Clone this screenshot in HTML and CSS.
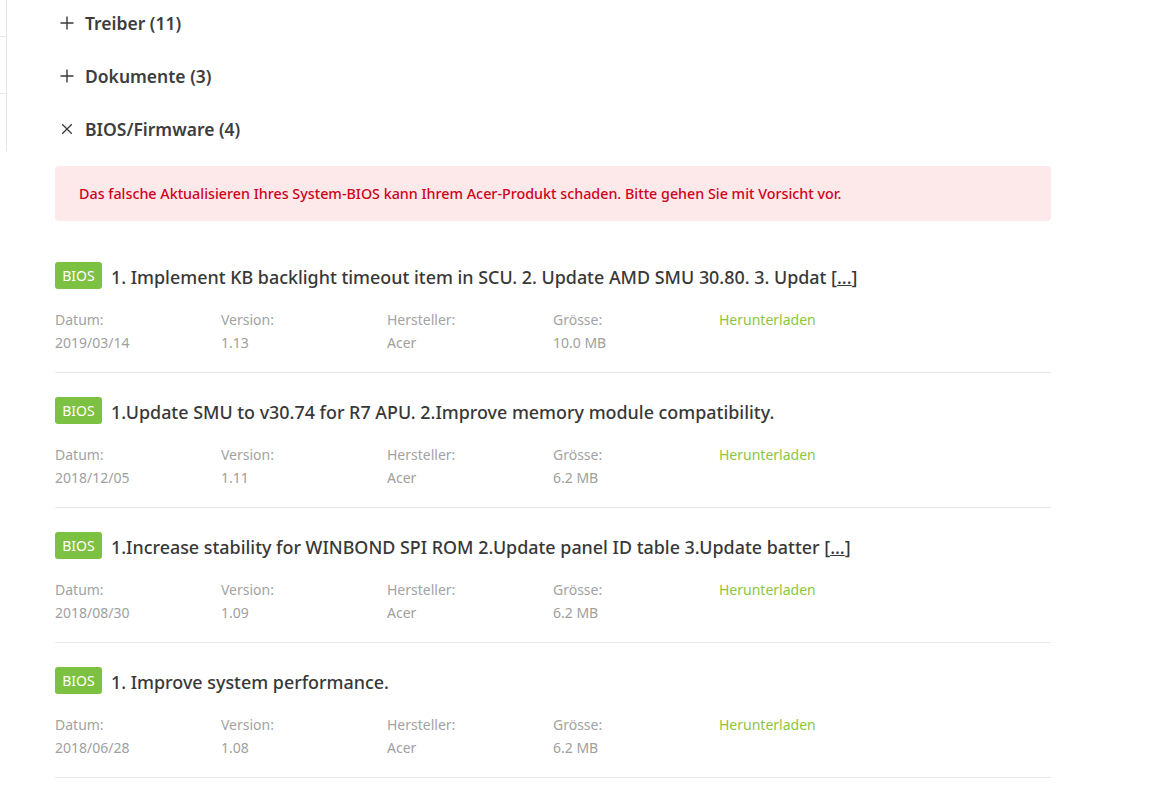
FILE: index.html
```html
<!DOCTYPE html>
<html lang="de">
<head>
<meta charset="utf-8">
<title>BIOS/Firmware</title>
<link rel="stylesheet" href="styles.css">
</head>
<body>
<div class="page">
  <aside class="sidebar">
    <div class="side-row r1"></div>
    <div class="side-row r2"></div>
    <div class="side-row r3"></div>
  </aside>
  <main class="content">
    <div class="accordion">
      <div class="acc-row">
        <svg class="acc-icon" viewBox="0 0 16 16"><path d="M8 1.5v13M1.5 8h13" /></svg>
        <span class="acc-title">Treiber (11)</span>
      </div>
      <div class="acc-row">
        <svg class="acc-icon" viewBox="0 0 16 16"><path d="M8 1.5v13M1.5 8h13" /></svg>
        <span class="acc-title">Dokumente (3)</span>
      </div>
      <div class="acc-row">
        <svg class="acc-icon close" viewBox="0 0 16 16"><path d="M3.2 3.2l9.6 9.6M12.8 3.2l-9.6 9.6" /></svg>
        <span class="acc-title">BIOS/Firmware (4)</span>
      </div>
    </div>

    <div class="alert">Das falsche Aktualisieren Ihres System-BIOS kann Ihrem Acer-Produkt schaden. Bitte gehen Sie mit Vorsicht vor.</div>

    <div class="items">
      <div class="item">
        <div class="item-head">
          <span class="badge">BIOS</span>
          <span class="item-title">1. Implement KB backlight timeout item in SCU. 2. Update AMD SMU 30.80. 3. Updat [<span class="more">...</span>]</span>
        </div>
        <div class="meta">
          <div class="cell"><span class="label">Datum:</span><span class="value">2019/03/14</span></div>
          <div class="cell"><span class="label">Version:</span><span class="value">1.13</span></div>
          <div class="cell"><span class="label">Hersteller:</span><span class="value">Acer</span></div>
          <div class="cell"><span class="label">Grösse:</span><span class="value">10.0 MB</span></div>
          <div class="cell"><span class="download">Herunterladen</span></div>
        </div>
      </div>
      <div class="item">
        <div class="item-head">
          <span class="badge">BIOS</span>
          <span class="item-title">1.Update SMU to v30.74 for R7 APU. 2.Improve memory module compatibility.</span>
        </div>
        <div class="meta">
          <div class="cell"><span class="label">Datum:</span><span class="value">2018/12/05</span></div>
          <div class="cell"><span class="label">Version:</span><span class="value">1.11</span></div>
          <div class="cell"><span class="label">Hersteller:</span><span class="value">Acer</span></div>
          <div class="cell"><span class="label">Grösse:</span><span class="value">6.2 MB</span></div>
          <div class="cell"><span class="download">Herunterladen</span></div>
        </div>
      </div>
      <div class="item">
        <div class="item-head">
          <span class="badge">BIOS</span>
          <span class="item-title">1.Increase stability for WINBOND SPI ROM 2.Update panel ID table 3.Update batter [<span class="more">...</span>]</span>
        </div>
        <div class="meta">
          <div class="cell"><span class="label">Datum:</span><span class="value">2018/08/30</span></div>
          <div class="cell"><span class="label">Version:</span><span class="value">1.09</span></div>
          <div class="cell"><span class="label">Hersteller:</span><span class="value">Acer</span></div>
          <div class="cell"><span class="label">Grösse:</span><span class="value">6.2 MB</span></div>
          <div class="cell"><span class="download">Herunterladen</span></div>
        </div>
      </div>
      <div class="item">
        <div class="item-head">
          <span class="badge">BIOS</span>
          <span class="item-title">1. Improve system performance.</span>
        </div>
        <div class="meta">
          <div class="cell"><span class="label">Datum:</span><span class="value">2018/06/28</span></div>
          <div class="cell"><span class="label">Version:</span><span class="value">1.08</span></div>
          <div class="cell"><span class="label">Hersteller:</span><span class="value">Acer</span></div>
          <div class="cell"><span class="label">Grösse:</span><span class="value">6.2 MB</span></div>
          <div class="cell"><span class="download">Herunterladen</span></div>
        </div>
      </div>
    </div>
  </main>
</div>
</body>
</html>
```

FILE: styles.css
```css
* { box-sizing: border-box; }
html, body {
  margin: 0;
  padding: 0;
  background: #fff;
  font-family: "Noto Sans", "Open Sans", sans-serif;
  color: #3a3a3a;
}
.page {
  display: flex;
  align-items: flex-start;
  overflow: hidden;
  height: 787px;
}
.sidebar {
  width: 7px;
  flex: 0 0 7px;
  border-right: 1px solid #e6e6e6;
  height: 151px;
}
.side-row { border-bottom: 1px solid #e6e6e6; }
.side-row.r1 { height: 37px; }
.side-row.r2 { height: 57px; }
.side-row.r3 { border-bottom: none; }
.content {
  margin-left: 48px;
  width: 996px;
}
.accordion {
  display: flex;
  flex-direction: column;
  gap: 7px;
}
.acc-row {
  height: 46px;
  display: flex;
  align-items: center;
}
.acc-icon {
  width: 16px;
  height: 16px;
  margin-left: 4px;
  margin-right: 10px;
  fill: none;
  stroke: #3a3a3a;
  stroke-width: 1.4;
}
.acc-icon.close { stroke-width: 1.3; }
.acc-title {
  font-size: 17.5px;
  font-weight: 600;
  color: #3d3d3d;
}
.alert {
  margin-top: 14px;
  height: 55px;
  background: #fde8ea;
  border-radius: 4px;
  display: flex;
  align-items: center;
  padding: 0 24px;
  color: #d0021b;
  font-size: 14.3px;
  font-weight: 500;
}
.items { margin-top: 17px; }
.item {
  padding: 24px 0 18px;
  border-bottom: 1px solid #e9e9e9;
}
.item-head {
  display: flex;
  align-items: center;
  height: 27px;
}
.badge {
  display: inline-flex;
  align-items: center;
  justify-content: center;
  width: 47px;
  height: 27px;
  background: #7cc142;
  color: #fff;
  border-radius: 3px;
  font-size: 14px;
  margin-right: 9px;
}
.item-title {
  font-size: 17.9px;
  font-weight: 500;
  color: #383838;
  white-space: nowrap;
  line-height: 27px;
  padding-top: 4px;
}
.more { text-decoration: underline; }
.meta {
  margin-top: 19px;
  display: grid;
  grid-template-columns: repeat(5, 166px);
}
.cell {
  display: flex;
  flex-direction: column;
  font-size: 14px;
  line-height: 23px;
}
.label { color: #a3a3a3; }
.value { color: #a0a0a0; }
.download { color: #8cc63f; }
```
